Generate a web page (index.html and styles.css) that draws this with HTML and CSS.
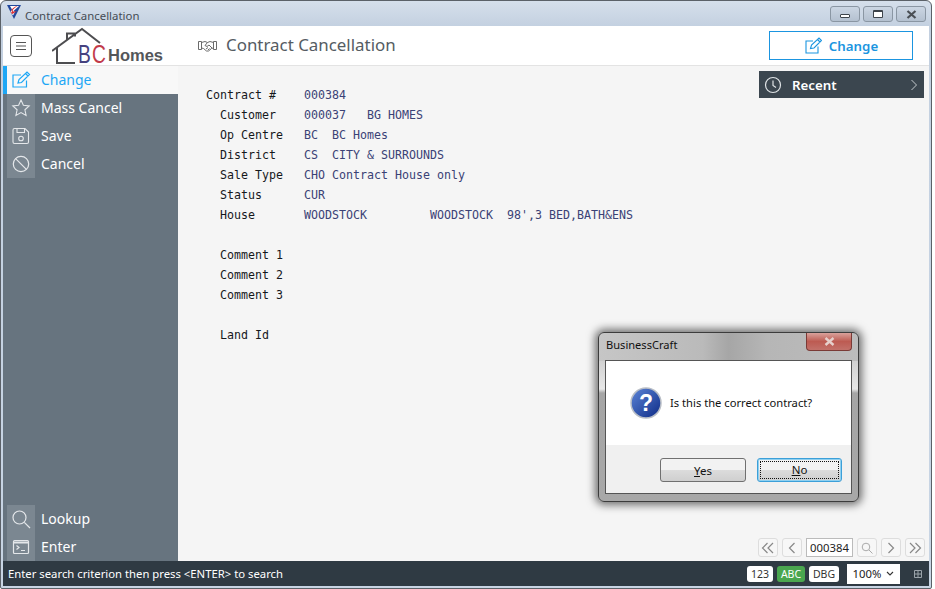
FILE: index.html
```html
<!DOCTYPE html>
<html lang="en">
<head>
<meta charset="utf-8">
<title>Contract Cancellation</title>
<link rel="stylesheet" href="styles.css">
</head>
<body>
<div class="window">
  <div class="titlebar">
    <svg class="app-icon" width="14" height="14" viewBox="0 0 14 14"><path d="M0 0h14L7 14z" fill="#23489c"/><path d="M3 1h9L6.500 6 8 7l-2 3.500L3.500 7 5 4.500z" fill="#fff"/><path d="M10.500 1C7 1.800 4.500 4 4.500 5.800c0 1.200 1.500 1.500 3.500 1-1.500 0-2.300-.4-2.300-1.100C5.700 4.300 8 2.500 10.500 1z" fill="#dc2a2f"/><path d="M3.500 7.500 10 6 5.500 9z" fill="#dc2a2f"/></svg>
    <span class="title-text">Contract Cancellation</span>
    <div class="win-controls">
      <div class="win-btn"><span class="glyph-min"></span></div>
      <div class="win-btn"><span class="glyph-max"></span></div>
      <div class="win-btn"><svg width="11" height="9" viewBox="0 0 11 9"><path d="M1.500 1 9.500 8M9.500 1 1.500 8" stroke="#4a4f55" stroke-width="2.200" fill="none"/></svg></div>
    </div>
  </div>
  <header class="header">
    <button class="hamburger"><svg width="14" height="12" viewBox="0 0 14 12"><path d="M2 2.500h10M2 6h10M2 9.500h10" stroke="#555" stroke-width="1" fill="none"/></svg></button>
    <div class="logo">
      <svg class="logo-house" width="58" height="38" viewBox="0 0 58 38"><path d="M0 24 30 2l18 14M15 13V6.500h8v3M5 20v16h18" stroke="#4d4d50" stroke-width="2" fill="none"/></svg>
      <span class="logo-b">B</span><span class="logo-c">C</span><span class="logo-homes">Homes</span>
    </div>
    <svg class="shake" width="19" height="13" viewBox="0 0 19 13"><path d="M.5 2.500h3v8h-3zM15.500 2.500h3v8h-3z" stroke="#6b6b6b" stroke-width="1" fill="none"/><path d="M3.500 3.500 7 2.500l2.500 1L12 2.500l3.500 1v5.500l-2 .5-3 2.500h-2l-3-2.500-2-.5z" stroke="#6b6b6b" stroke-width="1" fill="none"/><path d="M9.500 3.500 7 6.500l2 1 2-1.500 3 3M8 10l2-1.500M10 11l1.500-1.500" stroke="#6b6b6b" stroke-width="1" fill="none"/></svg>
    <h1 class="page-title">Contract Cancellation</h1>
    <button class="change-btn">
      <svg width="18" height="18" viewBox="0 0 18 18"><path d="M14 9.500V16H2V4h7" stroke="#1b95e0" stroke-width="1.100" fill="none"/><path d="M6.500 11.500l1-3.500 7.500-7 2.500 2.500-7.500 7.500zM13.500 2.500 16 5" stroke="#1b95e0" stroke-width="1.100" fill="none"/></svg>
      <span>Change</span>
    </button>
  </header>
  <div class="body">
    <aside class="sidebar">
      <nav class="menu">
        <div class="item active"><span class="ico"><svg width="20" height="20" viewBox="0 0 20 20"><path d="M15.500 10.500V17H2V5h8" stroke="currentColor" stroke-width="1.200" fill="none"/><path d="M7 13l1-3.500 8-7.500 2.500 2.500-8 8zM14.500 3.500 17 6" stroke="currentColor" stroke-width="1.200" fill="none"/></svg></span><span class="lbl">Change</span></div>
        <div class="item"><span class="ico"><svg width="20" height="20" viewBox="0 0 20 20"><path d="M10 2l2.400 5.300 5.800.6-4.300 3.900 1.200 5.700L10 14.600l-5.100 2.900 1.200-5.700-4.300-3.900 5.800-.6z" stroke="#e4e7ea" stroke-width="1.100" fill="none"/></svg></span><span class="lbl">Mass Cancel</span></div>
        <div class="item"><span class="ico"><svg width="20" height="20" viewBox="0 0 20 20"><path d="M3.500 2.500h10.500l3.500 3.500v10a1.500 1.500 0 0 1-1.500 1.500h-12.500a1.500 1.500 0 0 1-1.500-1.500v-12a1.500 1.500 0 0 1 1.500-1.500zM6 2.500v4h7.500v-4" stroke="#e4e7ea" stroke-width="1.100" fill="none"/><circle cx="10" cy="12.500" r="2.300" stroke="#e4e7ea" stroke-width="1.100" fill="none"/></svg></span><span class="lbl">Save</span></div>
        <div class="item"><span class="ico"><svg width="20" height="20" viewBox="0 0 20 20"><circle cx="10" cy="10" r="7.700" stroke="#e4e7ea" stroke-width="1.200" fill="none"/><path d="M4.600 4.600l10.800 10.800" stroke="#e4e7ea" stroke-width="1.200"/></svg></span><span class="lbl">Cancel</span></div>
      </nav>
      <nav class="menu">
        <div class="item"><span class="ico"><svg width="20" height="20" viewBox="0 0 20 20"><circle cx="8.500" cy="8.500" r="6.500" stroke="#e4e7ea" stroke-width="1.200" fill="none"/><path d="M13.300 13.300 19 19" stroke="#e4e7ea" stroke-width="1.200"/></svg></span><span class="lbl">Lookup</span></div>
        <div class="item"><span class="ico"><svg width="20" height="20" viewBox="0 0 20 20"><path d="M3.500 3.500h13a1 1 0 0 1 1 1v11a1 1 0 0 1-1 1h-13a1 1 0 0 1-1-1v-11a1 1 0 0 1 1-1z" stroke="#e4e7ea" stroke-width="1.200" fill="none"/><path d="M2.500 5.500h15" stroke="#e4e7ea" stroke-width="2"/><path d="M5.500 8.500 8 10.500l-2.500 2M10 13.500h4" stroke="#e4e7ea" stroke-width="1.200" fill="none"/></svg></span><span class="lbl">Enter</span></div>
      </nav>
    </aside>
    <main class="content">
      <div class="form">
        <div class="form-group">
          <div class="row first"><span class="k">Contract #</span><span class="v">000384</span></div>
          <div class="row"><span class="k">Customer</span><span class="v">000037   BG HOMES</span></div>
          <div class="row"><span class="k">Op Centre</span><span class="v">BC  BC Homes</span></div>
          <div class="row"><span class="k">District</span><span class="v">CS  CITY &amp; SURROUNDS</span></div>
          <div class="row"><span class="k">Sale Type</span><span class="v">CHO Contract House only</span></div>
          <div class="row"><span class="k">Status</span><span class="v">CUR</span></div>
          <div class="row"><span class="k">House</span><span class="v">WOODSTOCK         WOODSTOCK  98',3 BED,BATH&amp;ENS</span></div>
        </div>
        <div class="form-group">
          <div class="row"><span class="k">Comment 1</span></div>
          <div class="row"><span class="k">Comment 2</span></div>
          <div class="row"><span class="k">Comment 3</span></div>
        </div>
        <div class="form-group">
          <div class="row"><span class="k">Land Id</span></div>
        </div>
      </div>
      <div class="side-col">
        <div class="recent">
          <svg width="18" height="18" viewBox="0 0 18 18"><circle cx="9" cy="9" r="7.500" stroke="#dfe3e6" stroke-width="1.200" fill="none"/><path d="M9 4.500V9.500l3 2" stroke="#dfe3e6" stroke-width="1.200" fill="none"/></svg>
          <span class="recent-lbl">Recent</span>
          <svg width="8" height="12" viewBox="0 0 8 12"><path d="M1.500 1 6.500 6l-5 5" stroke="#c4cace" stroke-width="1" fill="none"/></svg>
        </div>
        <div class="pager">
          <button class="pg"><svg width="14" height="12" viewBox="0 0 14 12"><path d="M6.500 1 1.500 6l5 5M12 1 7 6l5 5" stroke="#888" stroke-width="1.200" fill="none"/></svg></button>
          <button class="pg"><svg width="8" height="12" viewBox="0 0 8 12"><path d="M6.500 1 1.500 6l5 5" stroke="#888" stroke-width="1.200" fill="none"/></svg></button>
          <span class="pg-input">000384</span>
          <button class="pg"><svg width="12" height="12" viewBox="0 0 12 12"><circle cx="5" cy="5" r="3.800" stroke="#aaa" fill="none"/><path d="M8 8l3.500 3.500" stroke="#aaa" fill="none"/></svg></button>
          <button class="pg"><svg width="8" height="12" viewBox="0 0 8 12"><path d="M1.500 1 6.500 6l-5 5" stroke="#888" stroke-width="1.200" fill="none"/></svg></button>
          <button class="pg"><svg width="14" height="12" viewBox="0 0 14 12"><path d="M2 1l5 5-5 5M7.500 1l5 5-5 5" stroke="#888" stroke-width="1.200" fill="none"/></svg></button>
        </div>
      </div>
    </main>
  </div>
  <footer class="status">
    <span class="status-msg">Enter search criterion then press &lt;ENTER&gt; to search</span>
    <span class="badge">123</span>
    <span class="badge on">ABC</span>
    <span class="badge dbg">DBG</span>
    <span class="zoom-sel">100% <svg width="8" height="5" viewBox="0 0 8 5"><path d="M1 1l3 3 3-3" stroke="#333" stroke-width="1.100" fill="none"/></svg></span>
    <svg class="grid-ico" width="8" height="8" viewBox="0 0 8 8"><path d="M.5.500h7v7h-7zM.5 4h7M4 .500v7" stroke="#9aa3aa" fill="none"/></svg>
  </footer>
</div>

<div class="dialog">
  <div class="dlg-title">
    <span class="dlg-name">BusinessCraft</span>
    <div class="dlg-close"><svg width="11" height="9" viewBox="0 0 11 9"><path d="M1.500 1 9.500 8M9.500 1 1.500 8" stroke="#e6d0cc" stroke-width="2.400" fill="none"/></svg></div>
  </div>
  <div class="dlg-inner">
    <div class="dlg-msg">
      <svg width="32" height="32" viewBox="0 0 32 32"><defs><linearGradient id="qb" x1="0" y1="0" x2="1" y2="1"><stop offset="0" stop-color="#5d86d8"/><stop offset="1" stop-color="#0d2a85"/></linearGradient></defs><circle cx="16" cy="16" r="15" fill="url(#qb)" stroke="#b9bec6" stroke-width="1.500"/><text x="16" y="24" text-anchor="middle" class="q-mark">?</text></svg>
      <span class="dlg-text">Is this the correct contract?</span>
    </div>
    <div class="dlg-foot">
      <button class="dlg-btn"><u>Y</u>es</button>
      <button class="dlg-btn def"><span class="focus"><u>N</u>o</span></button>
    </div>
  </div>
</div>
</body>
</html>
```
FILE: styles.css
```css
* { box-sizing: border-box; }
html, body { margin: 0; padding: 0; width: 935px; height: 589px; overflow: hidden; background: #fff; }
body { font-family: "Noto Sans", sans-serif; position: relative; }
button { font-family: inherit; cursor: default; }

.window { width: 932px; height: 589px; display: flex; flex-direction: column; background: linear-gradient(#d5dfeb, #c3d0e0 26px, #c8d5e4); border: 1px solid #5b6168; border-radius: 6px 6px 2px 2px; padding: 0 2px 2px; }
.titlebar { height: 25px; flex: none; display: flex; align-items: center; padding-left: 4px; }
.app-icon { flex: none; margin-top: -3px; }
.title-text { margin-left: 4px; font-size: 11.400px; color: #454c54; padding-top: 3px; }
.win-controls { margin-left: auto; display: flex; gap: 3px; padding-right: 3px; margin-top: 1px; }
.win-btn { width: 30px; height: 16px; border: 1px solid #8a96a3; border-radius: 3px; background: linear-gradient(#cbd6e3, #b4c1d0); display: flex; align-items: center; justify-content: center; }
.glyph-min { width: 10px; height: 4px; border: 1px solid #3d444b; background: #fff; margin-top: 3px; border-radius: 1px; }
.glyph-max { width: 10px; height: 8px; border: 1px solid #3d444b; border-top-width: 2px; background: #fff; border-radius: 1px; }

.header { height: 40px; flex: none; background: #fff; border-bottom: 1px solid #e3e3e3; display: flex; align-items: center; }
.hamburger { margin-left: 7px; width: 22px; height: 22px; padding: 0; border: 1px solid #555; border-radius: 4px; background: #fff; display: flex; align-items: center; justify-content: center; }
.logo { margin-left: 20px; width: 112px; height: 38px; flex: none; position: relative; display: flex; align-items: flex-end; padding-left: 26px; line-height: 22px; }
.logo-house { position: absolute; left: 0; top: 0; }
.logo-b, .logo-c { font-family: "Liberation Sans", sans-serif; font-size: 26px; font-weight: 400; position: relative; width: 14px; transform: scaleX(.74); transform-origin: left center; }
.logo-b { color: #46417f; }
.logo-c { color: #c23a4a; margin-right: 2px; }
.logo-homes { font-family: "Liberation Sans", sans-serif; font-size: 16.500px; font-weight: 700; color: #54565a; position: relative; margin-bottom: -1px; }
.shake { margin-left: 34px; flex: none; }
.page-title { margin: 0 0 0 9px; padding-bottom: 3px; font-size: 16.900px; font-weight: 400; color: #555c63; }
.change-btn { margin-left: auto; margin-right: 16px; width: 144px; height: 29px; border: 1px solid #1b95e0; background: #fff; color: #1b95e0; font-size: 13.300px; font-weight: 600; display: flex; align-items: center; justify-content: center; gap: 7px; padding: 0; }

.body { flex: 1; min-height: 0; display: flex; }
.sidebar { width: 175px; flex: none; background: #67747f; display: flex; flex-direction: column; justify-content: space-between; color: #fff; }
.item { height: 28px; display: flex; align-items: center; padding-left: 4px; font-size: 14px; }
.ico { width: 28px; height: 28px; background: #7b8791; display: flex; align-items: center; justify-content: center; }
.lbl { margin-left: 6px; padding-bottom: 2px; }
.item.active { color: #1ea7f5; border-left: 4px solid #1ea7f5; padding-left: 0; background: #f8f8f8; }
.item.active .ico { background: transparent; }

.content { flex: 1; min-width: 0; background: #f5f5f5; display: flex; justify-content: space-between; }
.form { padding: 19px 0 0 28px; font-family: "DejaVu Sans Mono", monospace; font-size: 11.630px; line-height: 20px; }
.form-group { margin-bottom: 20px; }
.row { display: flex; height: 20px; }
.k { width: 84px; margin-left: 14px; color: #15181c; }
.row.first .k { width: 98px; margin-left: 0; }
.v { color: #3a4276; white-space: pre; }
.side-col { width: 180px; flex: none; display: flex; flex-direction: column; justify-content: space-between; padding: 5px 5px 4px 0; }
.recent { margin-left: 10px; height: 27px; background: #3b464f; color: #fff; display: flex; align-items: center; padding: 0 6px 0 5px; font-size: 13.300px; font-weight: 600; }
.recent-lbl { margin-left: 10px; margin-right: auto; }
.pager { display: flex; align-items: center; gap: 4px; justify-content: flex-end; margin-right: -1px; }
.pg { width: 20px; height: 19px; padding: 0; border: 1px solid #ddd; border-radius: 3px; background: #f7f7f7; display: flex; align-items: center; justify-content: center; }
.pg-input { width: 47px; height: 19px; border: 1px solid #bbb; background: #fff; font-size: 11.300px; line-height: 18px; color: #222; text-align: center; }

.status { height: 25px; flex: none; background: #2f3a43; display: flex; align-items: center; color: #fff; font-size: 11.300px; padding-left: 5px; }
.status-msg { margin-right: auto; }
.badge { height: 16px; width: 26px; margin-left: 4px; border-radius: 3px; background: #fff; color: #333; font-size: 10.500px; line-height: 16px; text-align: center; }
.badge.on { width: 28px; background: #4aa64f; color: #fff; }
.badge.dbg { width: 30px; }
.zoom-sel { margin-left: 8px; width: 53px; height: 20px; background: #fff; color: #222; font-size: 11.300px; display: flex; align-items: center; justify-content: center; gap: 5px; }
.grid-ico { margin-left: 14px; margin-right: 7px; }

.dialog { position: absolute; left: 598px; top: 332px; width: 261px; height: 170px; border: 1px solid #3c3c3c; border-radius: 6px; padding: 0 6px 7px; background: linear-gradient(90deg, #c6c6c6, #bababa 40%, #a6a6a6 50%, #b6b6b6 65%, #bcbcbc) 0 0 / 100% 28px no-repeat, linear-gradient(#bbb, #e8e8e8 56px, #a5a5a5 60px, #a8a8a8); box-shadow: 0 0 8px 3px rgba(0,0,0,.55); display: flex; flex-direction: column; }
.dlg-title { height: 27px; flex: none; display: flex; align-items: center; justify-content: space-between; font-size: 11.100px; color: #111; padding-left: 1px; }
.dlg-name { padding-bottom: 4px; }
.dlg-close { align-self: flex-start; width: 46px; height: 18px; border: 1px solid #7a3a36; border-top: none; border-radius: 0 0 4px 4px; background: linear-gradient(#d9a29b, #bd5b52 50%, #c2716a); display: flex; align-items: center; justify-content: center; }
.dlg-inner { flex: 1; border: 1px solid #555; background: #fff; display: flex; flex-direction: column; }
.dlg-msg { height: 84px; flex: none; display: flex; align-items: center; padding: 0 0 0 24px; gap: 8px; font-size: 11.200px; color: #111; }
.dlg-text { padding-bottom: 2px; }
.q-mark { font-family: "Liberation Sans", sans-serif; font-size: 23px; font-weight: 700; fill: #fff; }
.dlg-foot { flex: 1; background: #f0f0f0; display: flex; justify-content: flex-end; align-items: flex-start; gap: 11px; padding: 13px 9px 0 0; }
.dlg-btn { width: 86px; height: 24px; padding: 0; border: 1px solid #707070; border-radius: 3px; background: linear-gradient(#f2f2f2 50%, #dcdcdc 50%, #cfcfcf); font-size: 11.500px; color: #111; }
.dlg-btn.def { width: 85px; border: 1px solid #3c9fd8; box-shadow: inset 0 0 0 1px #8fd0f0; padding: 2px; }
.focus { display: block; height: 100%; border: 1px dotted #111; line-height: 16px; }
```
